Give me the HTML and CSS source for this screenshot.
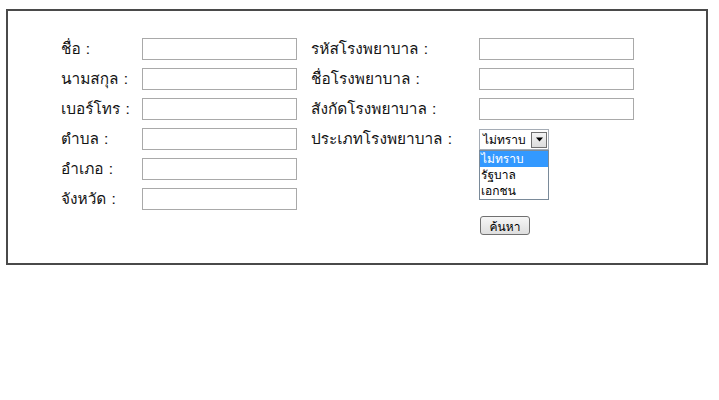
FILE: index.html
```html
<!DOCTYPE html>
<html lang="th">
<head>
<meta charset="utf-8">
<title>ค้นหาโรงพยาบาล</title>
<link rel="stylesheet" href="styles.css">
</head>
<body>
<div class="box">
  <form class="form">
    <label class="lbl">ชื่อ :</label>
    <input class="txt" type="text">
    <label class="lbl lbl-r">รหัสโรงพยาบาล :</label>
    <input class="txt" type="text">

    <label class="lbl">นามสกุล :</label>
    <input class="txt" type="text">
    <label class="lbl lbl-r">ชื่อโรงพยาบาล :</label>
    <input class="txt" type="text">

    <label class="lbl">เบอร์โทร :</label>
    <input class="txt" type="text">
    <label class="lbl lbl-r">สังกัดโรงพยาบาล :</label>
    <input class="txt" type="text">

    <label class="lbl">ตำบล :</label>
    <input class="txt" type="text">
    <label class="lbl lbl-r">ประเภทโรงพยาบาล :</label>
    <div class="selwrap">
      <div class="sel">
        <span class="sel-val">ไม่ทราบ</span>
        <span class="sel-btn"><svg width="9" height="5" viewBox="0 0 9 5"><path d="M1 0.5h7L4.5 4.5z" fill="#000"/></svg></span>
      </div>
      <ul class="sel-list">
        <li class="opt opt-on">ไม่ทราบ</li>
        <li class="opt">รัฐบาล</li>
        <li class="opt">เอกชน</li>
      </ul>
    </div>

    <label class="lbl">อำเภอ :</label>
    <input class="txt" type="text">
    <span class="empty"></span>
    <span class="empty"></span>

    <label class="lbl">จังหวัด :</label>
    <input class="txt" type="text">
    <span class="empty"></span>
    <span class="empty"></span>

    <span class="empty"></span>
    <span class="empty"></span>
    <span class="empty"></span>
    <div class="btnwrap"><button class="btn" type="button">ค้นหา</button></div>
  </form>
</div>
</body>
</html>
```
FILE: styles.css
```css
html, body {
  margin: 0;
  padding: 0;
  background: #fff;
}
body {
  font-family: Loma, "Noto Sans Thai Looped", Tahoma, "Noto Sans Thai", "DejaVu Sans", sans-serif;
  font-size: 15.4px;
  color: #141414;
}
.box {
  margin: 9px 0 0 6px;
  width: 698px;
  height: 252px;
  border: 2px solid #4a4a4a;
}
.form {
  display: grid;
  grid-template-columns: 81px 155px 182px 155px;
  grid-template-rows: repeat(7, 22px);
  row-gap: 8px;
  column-gap: 0;
  padding: 27px 0 0 53px;
}
.lbl {
  display: flex;
  align-items: center;
  line-height: 22px;
  white-space: nowrap;
}
.lbl-r {
  margin-left: 14px;
}
.txt {
  box-sizing: border-box;
  width: 155px;
  height: 22px;
  margin: 0;
  border: 1px solid #a9a9a9;
  background: #fff;
  padding: 0 2px;
}
.selwrap {
  position: relative;
  padding-top: 1px;
}
.sel {
  box-sizing: border-box;
  width: 70px;
  height: 21px;
  border: 1px solid #a5acb5;
  display: flex;
  align-items: center;
  background: #fff;
  font-size: 12px;
  color: #000;
}
.sel-val {
  flex: 1;
  padding-left: 3px;
}
.sel-btn {
  box-sizing: border-box;
  width: 16px;
  height: 16px;
  margin-right: 1px;
  border: 1px solid #707070;
  background: linear-gradient(#f4f4f4, #dcdcdc);
  display: flex;
  align-items: center;
  justify-content: center;
}
.sel-list {
  position: absolute;
  left: 0;
  top: 22px;
  width: 70px;
  box-sizing: border-box;
  margin: 0;
  padding: 0;
  list-style: none;
  border: 1px solid #7a8a99;
  background: #fff;
  font-size: 12px;
  color: #000;
  z-index: 2;
}
.opt {
  height: 16px;
  line-height: 16px;
  padding-left: 1px;
}
.opt-on {
  background: #3399ff;
  color: #fff;
}
.btnwrap {
  display: flex;
  align-items: flex-start;
}
.btn {
  box-sizing: border-box;
  width: 50px;
  height: 19px;
  margin: -2px 0 0 1px;
  padding: 0;
  border: 1px solid #707070;
  border-radius: 3px;
  background: linear-gradient(#f6f6f6, #dedede);
  font-family: inherit;
  font-size: 12px;
  color: #000;
}
```
